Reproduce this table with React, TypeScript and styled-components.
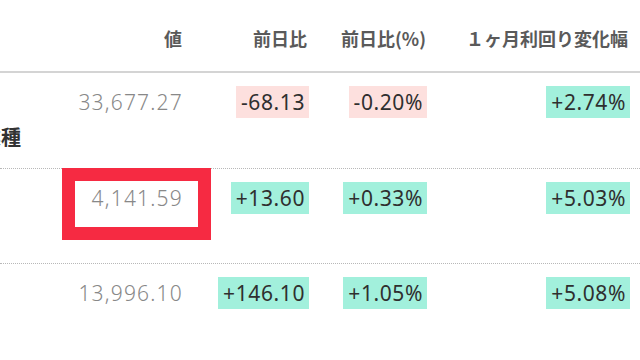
import React from "react";
import styled, { createGlobalStyle } from "styled-components";

const Global = createGlobalStyle`
  html, body { margin: 0; padding: 0; background: #ffffff; }
  body { width: 640px; height: 360px; overflow: hidden; font-family: "Noto Sans", "Noto Sans CJK JP", sans-serif; }
`;

const Table = styled.div`
  width: 640px;
  height: 360px;
  overflow: hidden;
  display: flex;
  flex-direction: column;
`;

const cols = "40px 142px 127px 118px 203px";

const HeadRow = styled.div`
  display: grid;
  grid-template-columns: ${cols};
  align-items: center;
  border-bottom: 2px solid #d4d4d4;
  box-sizing: border-box;
  height: 74px;
`;

const HeadCell = styled.div<{ $pr?: number }>`
  text-align: right;
  font-family: "Noto Sans CJK JP", sans-serif;
  font-weight: 700;
  font-size: 18px;
  color: #5a5a5a;
  padding-right: ${(p) => p.$pr ?? 0}px;
  margin-top: 6px;
  white-space: nowrap;
`;

const Row = styled.div<{ $last?: boolean }>`
  display: grid;
  grid-template-columns: ${cols};
  height: 97px;
  box-sizing: border-box;
  border-bottom: ${(p) => (p.$last ? "none" : "1px dotted #b8b8b8")};
  padding-top: 13px;
  align-items: start;
`;

const LabelCell = styled.div`
  white-space: nowrap;
  font-family: "Noto Sans CJK JP", sans-serif;
  font-weight: 700;
  font-size: 20px;
  color: #333;
  padding-top: 36px;
  margin-left: -19px;
`;

const ValueCell = styled.div`
  position: relative;
  text-align: right;
  font-size: 21px;
  font-weight: 300;
  letter-spacing: 1.2px;
  color: #888888;
  line-height: 32px;
  margin-right: -1px;
`;

const Annotation = styled.div`
  position: absolute;
  left: 22px;
  top: -14px;
  width: 149px;
  height: 72px;
  box-sizing: border-box;
  border: 13px solid #f62a42;
`;

const BadgeCell = styled.div`
  display: flex;
  justify-content: flex-end;
`;

const Badge = styled.span<{ $up: boolean }>`
  display: inline-block;
  background: ${(p) => (p.$up ? "#a2f0dc" : "#fde0de")};
  color: #2f2f2f;
  font-size: 21px;
  font-weight: 400;
  letter-spacing: 0.6px;
  line-height: 32px;
  padding: 0 4px 0 5px;
`;

type RowData = { label?: string; value: string; d: string; p: string; m: string; mark?: boolean };

const rows: RowData[] = [
  { label: "業種", value: "33,677.27", d: "-68.13", p: "-0.20%", m: "+2.74%" },
  { value: "4,141.59", d: "+13.60", p: "+0.33%", m: "+5.03%", mark: true },
  { value: "13,996.10", d: "+146.10", p: "+1.05%", m: "+5.08%" },
];

export default function App() {
  return (
    <>
      <Global />
      <Table>
        <HeadRow>
          <div />
          <HeadCell>値</HeadCell>
          <HeadCell $pr={2}>前日比</HeadCell>
          <HeadCell $pr={1}>前日比(%)</HeadCell>
          <HeadCell $pr={2}>１ヶ月利回り変化幅</HeadCell>
        </HeadRow>
        {rows.map((r, i) => (
          <Row key={i} $last={i === rows.length - 1}>
            <LabelCell>{r.label ?? ""}</LabelCell>
            <ValueCell>
              {r.value}
              {r.mark && <Annotation />}
            </ValueCell>
            <BadgeCell>
              <Badge $up={r.d.startsWith("+")}>{r.d}</Badge>
            </BadgeCell>
            <BadgeCell>
              <Badge $up={r.p.startsWith("+")}>{r.p}</Badge>
            </BadgeCell>
            <BadgeCell>
              <Badge $up={r.m.startsWith("+")}>{r.m}</Badge>
            </BadgeCell>
          </Row>
        ))}
      </Table>
    </>
  );
}
